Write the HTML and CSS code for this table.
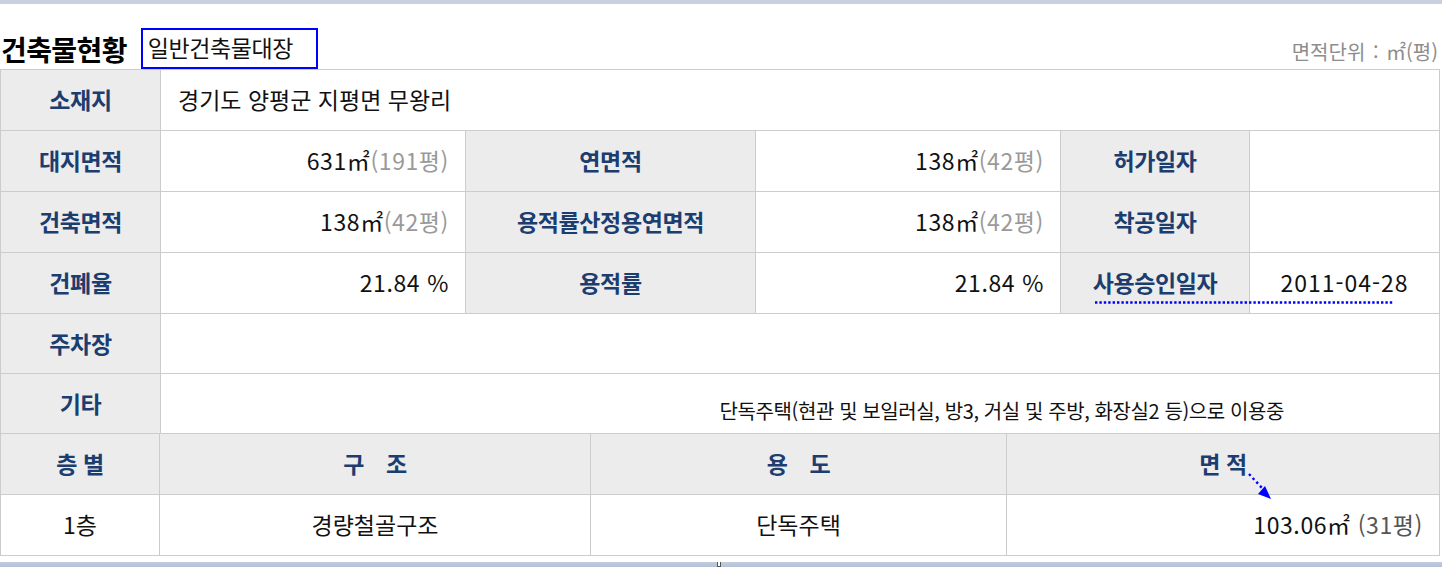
FILE: index.html
```html
<!DOCTYPE html>
<html lang="ko">
<head>
<meta charset="utf-8">
<title>건축물현황</title>
<link rel="stylesheet" href="styles.css">
</head>
<body>
<div class="topbar"></div>
<div class="header">
  <h2 class="title">건축물현황</h2>
  <div class="kind">일반건축물대장</div>
  <div class="unit">면적단위 : ㎡(평)</div>
</div>
<div class="sheet">
  <table class="grid upper">
    <colgroup>
      <col class="c1"><col class="c2"><col class="c3"><col class="c4"><col class="c5"><col class="c6">
    </colgroup>
    <tr>
      <th>소재지</th>
      <td class="left" colspan="5">경기도 양평군 지평면 무왕리</td>
    </tr>
    <tr>
      <th>대지면적</th>
      <td class="num">631㎡<span class="py">(191평)</span></td>
      <th>연면적</th>
      <td class="num">138㎡<span class="py">(42평)</span></td>
      <th>허가일자</th>
      <td></td>
    </tr>
    <tr>
      <th>건축면적</th>
      <td class="num">138㎡<span class="py">(42평)</span></td>
      <th>용적률산정용연면적</th>
      <td class="num">138㎡<span class="py">(42평)</span></td>
      <th>착공일자</th>
      <td></td>
    </tr>
    <tr>
      <th>건폐율</th>
      <td class="num">21.84 %</td>
      <th>용적률</th>
      <td class="num">21.84 %</td>
      <th>사용승인일자</th>
      <td class="center date">2011-04-28</td>
    </tr>
    <tr class="short">
      <th>주차장</th>
      <td colspan="5"></td>
    </tr>
    <tr class="short">
      <th>기타</th>
      <td class="etc" colspan="5">단독주택(현관 및 보일러실, 방3, 거실 및 주방, 화장실2 등)으로 이용중</td>
    </tr>
  </table>
  <table class="grid lower">
    <colgroup>
      <col class="d1"><col class="d2"><col class="d3"><col class="d4">
    </colgroup>
    <tr>
      <th>층 별</th>
      <th>구&ensp;&ensp;조</th>
      <th>용&ensp;&ensp;도</th>
      <th>면 적</th>
    </tr>
    <tr>
      <td class="center">1층</td>
      <td class="center">경량철골구조</td>
      <td class="center">단독주택</td>
      <td class="num">103.06㎡ <span class="py2">(31평)</span></td>
    </tr>
  </table>
  <svg class="marks" width="1442" height="500" viewBox="0 0 1442 500" aria-hidden="true">
    <line x1="1095" y1="233.5" x2="1393" y2="233.5" stroke="#0000ff" stroke-width="2.4" stroke-dasharray="2.4 2"/>
    <line x1="1249" y1="405" x2="1262" y2="419" stroke="#0000ff" stroke-width="2.4" stroke-dasharray="2.4 3"/>
    <polygon points="1265,417 1258,425 1271,430" fill="#0000ff"/>
  </svg>
</div>
<div class="bottombar"><span class="grip"></span></div>
</body>
</html>
```

FILE: styles.css
```css
html, body {
  margin: 0;
  padding: 0;
  background: #ffffff;
}

body {
  font-family: "Noto Sans CJK KR", "Noto Sans", sans-serif;
  color: #111111;
  width: 1442px;
  height: 567px;
  overflow: hidden;
  position: relative;
}

.topbar {
  height: 4px;
  background: #c9d1e1;
}

.header {
  display: flex;
  align-items: center;
  margin-top: 24px;
  height: 41px;
  padding-left: 1px;
  padding-right: 5px;
}

.title {
  margin: 0;
  font-size: 28px;
  font-weight: 700;
  letter-spacing: -0.6px;
  color: #000;
  line-height: 1;
  padding-top: 0;
}

.kind {
  margin-left: 14px;
  box-sizing: border-box;
  width: 177px;
  height: 41px;
  border: 2px solid #0000ff;
  font-size: 23px;
  line-height: 35px;
  padding-left: 5px;
  color: #111;
  letter-spacing: -0.4px;
  white-space: nowrap;
}

.unit {
  margin-left: auto;
  align-self: flex-end;
  font-size: 20px;
  color: #8d8d8d;
  line-height: 1;
  word-spacing: 2px;
  padding-bottom: 7px;
  margin-right: -1px;
}

.sheet {
  position: relative;
}

.grid {
  border-collapse: collapse;
  table-layout: fixed;
  width: 1439px;
}

.upper .c1 { width: 160px; }
.upper .c2 { width: 305px; }
.upper .c3 { width: 290px; }
.upper .c4 { width: 305px; }
.upper .c5 { width: 189px; }
.upper .c6 { width: 190px; }

.lower .d1 { width: 159px; }
.lower .d2 { width: 431px; }
.lower .d3 { width: 416px; }
.lower .d4 { width: 433px; }

.grid th,
.grid td {
  border: 1px solid #cccccc;
  height: 60px;
  padding: 0 16px;
  font-size: 23px;
  line-height: 1.2;
  vertical-align: middle;
  white-space: nowrap;
}

.grid tr.short th,
.grid tr.short td {
  height: 59px;
}

.grid th {
  background: #ececec;
  color: #1b3d6f;
  font-weight: 700;
  text-align: center;
  letter-spacing: -0.4px;
}

.grid td {
  color: #111;
}

.lower tr:first-child th {
  border-top: 0;
}

.grid td.left {
  text-align: left;
  padding-left: 17px;
}

.grid td.num {
  text-align: right;
  letter-spacing: 0.6px;
}

.grid td.center {
  text-align: center;
}

.grid td.date {
  letter-spacing: 1px;
}

.py {
  color: #9a9a9a;
}

.py2 {
  color: #555555;
}

.grid tr.short td.etc {
  font-size: 20px;
  text-align: right;
  padding-right: 155px;
  padding-top: 15px;
  height: 44px;
  letter-spacing: -0.4px;
}

.marks {
  position: absolute;
  left: 0;
  top: 0;
  pointer-events: none;
}

.bottombar {
  position: absolute;
  left: 0;
  right: 0;
  top: 562px;
  height: 5px;
  background: linear-gradient(#c3cde0, #b3c0d5);
}

.grip {
  position: absolute;
  left: 717px;
  top: 0;
  width: 2px;
  height: 4px;
  background: #fff;
  border: 1px solid #555;
  border-top: 0;
}
```
